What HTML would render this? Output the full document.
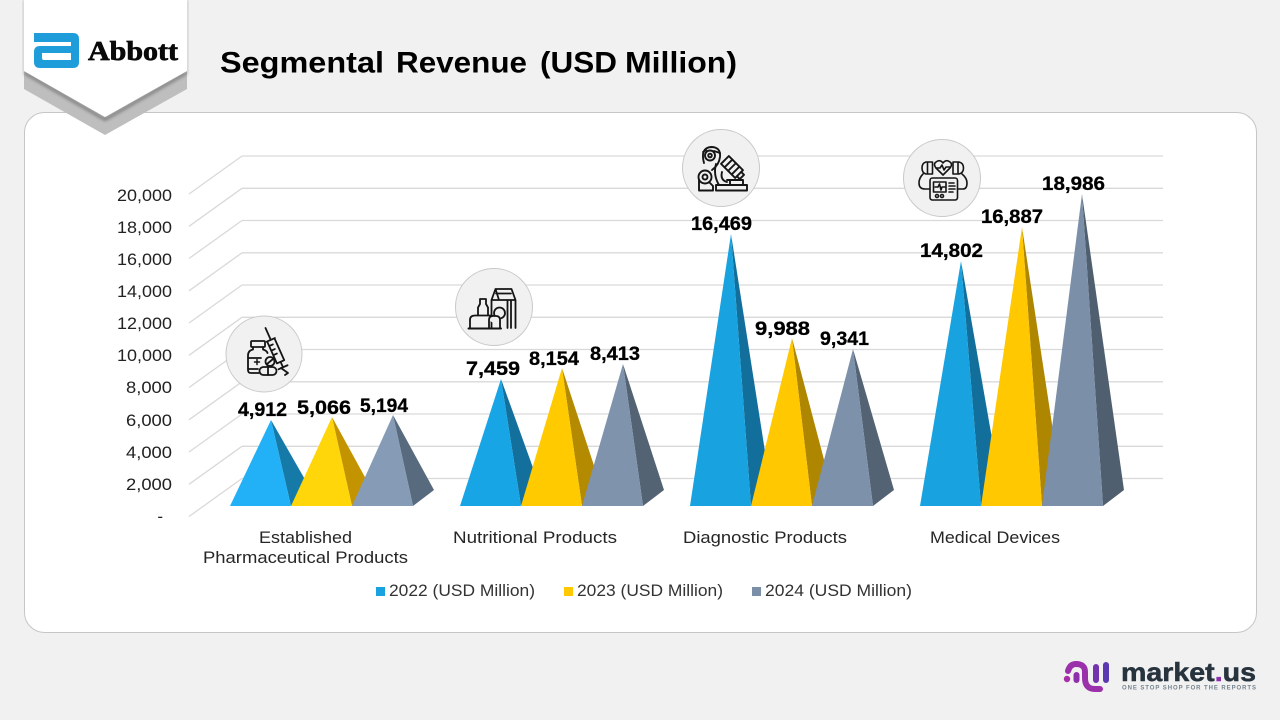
<!DOCTYPE html>
<html>
<head>
<meta charset="utf-8">
<style>
html,body{margin:0;padding:0;background:#f1f1f1;width:1280px;height:720px;overflow:hidden}
svg{display:block}
text{font-family:"Liberation Sans",sans-serif}
</style>
</head>
<body>
<svg width="1280" height="720" viewBox="0 0 1280 720" xmlns="http://www.w3.org/2000/svg">
<defs>
<filter id="bl" x="-10%" y="-30%" width="120%" height="160%"><feGaussianBlur stdDeviation="1.6"/></filter>
</defs>
<rect width="1280" height="720" fill="#f1f1f1"/>
<!-- card -->
<rect x="24.5" y="112.5" width="1232" height="520" rx="20" fill="#fff" stroke="#c6c6c6"/>

<!-- grid -->
<g stroke="#d9d9d9" stroke-width="1.300" fill="none">
<path d="M242 156H1163M242 188.300H1163M242 220.500H1163M242 252.800H1163M242 285H1163M242 317.300H1163M242 349.500H1163M242 381.800H1163M242 414H1163M242 446.300H1163M242 478.500H1163"/>
<path d="M242 156L189 194M242 188.300L189 226.300M242 220.500L189 258.500M242 252.800L189 290.800M242 285L189 323M242 317.300L189 355.300M242 349.500L189 387.500M242 381.800L189 419.800M242 414L189 452M242 446.300L189 484.300M242 478.500L189 516.500"/>
</g>

<!-- pyramids group 1 -->
<polygon points="271,420 291,506 311,490" fill="#157aa8"/>
<polygon points="271,420 230,506 291,506" fill="#22b0f6"/>
<polygon points="332,417 352,506 372,490" fill="#c49400"/>
<polygon points="332,417 291,506 352,506" fill="#ffd60a"/>
<polygon points="393,415 413,506 434,490" fill="#586a7e"/>
<polygon points="393,415 352,506 413,506" fill="#869bb5"/>
<!-- group 2 -->
<polygon points="501,379 521,506 541,490" fill="#13709c"/>
<polygon points="501,379 460,506 521,506" fill="#18a5e6"/>
<polygon points="562,368 582,506 602,490" fill="#b38a00"/>
<polygon points="562,368 521,506 582,506" fill="#ffcb00"/>
<polygon points="623,364 643,506 664,490" fill="#536373"/>
<polygon points="623,364 582,506 643,506" fill="#7f93ac"/>
<!-- group 3 -->
<polygon points="731,234 751,506 771,490" fill="#126f9b"/>
<polygon points="731,234 690,506 751,506" fill="#18a2e0"/>
<polygon points="792,338 812,506 832,490" fill="#ae8600"/>
<polygon points="792,338 751,506 812,506" fill="#ffc800"/>
<polygon points="853,349 873,506 894,490" fill="#536373"/>
<polygon points="853,349 812,506 873,506" fill="#7d91aa"/>
<!-- group 4 -->
<polygon points="961,261 981,506 1001,490" fill="#126f9b"/>
<polygon points="961,261 920,506 981,506" fill="#18a2e0"/>
<polygon points="1022,227 1042,506 1062,490" fill="#ae8600"/>
<polygon points="1022,227 981,506 1042,506" fill="#ffc800"/>
<polygon points="1082,194 1103,506 1124,490" fill="#505f6f"/>
<polygon points="1082,194 1042,506 1103,506" fill="#7b8fa8"/>

<!-- axis labels -->
<g font-size="17" fill="#222" text-anchor="end">
<text x="172" y="201" textLength="55" lengthAdjust="spacingAndGlyphs">20,000</text>
<text x="172" y="233" textLength="55" lengthAdjust="spacingAndGlyphs">18,000</text>
<text x="172" y="265" textLength="55" lengthAdjust="spacingAndGlyphs">16,000</text>
<text x="172" y="297" textLength="55" lengthAdjust="spacingAndGlyphs">14,000</text>
<text x="172" y="329" textLength="55" lengthAdjust="spacingAndGlyphs">12,000</text>
<text x="172" y="361" textLength="55" lengthAdjust="spacingAndGlyphs">10,000</text>
<text x="172" y="393" textLength="46" lengthAdjust="spacingAndGlyphs">8,000</text>
<text x="172" y="426" textLength="46" lengthAdjust="spacingAndGlyphs">6,000</text>
<text x="172" y="458" textLength="46" lengthAdjust="spacingAndGlyphs">4,000</text>
<text x="172" y="490" textLength="46" lengthAdjust="spacingAndGlyphs">2,000</text>
<text x="163" y="522">-</text>
</g>

<!-- value labels -->
<g font-size="19.500" font-weight="700" fill="#000" stroke="#000" stroke-width=".3">
<text x="238" y="416" textLength="49" lengthAdjust="spacingAndGlyphs">4,912</text>
<text x="297" y="414" textLength="54" lengthAdjust="spacingAndGlyphs">5,066</text>
<text x="360" y="412" textLength="48" lengthAdjust="spacingAndGlyphs">5,194</text>
<text x="466" y="375" textLength="54" lengthAdjust="spacingAndGlyphs">7,459</text>
<text x="529" y="365" textLength="50" lengthAdjust="spacingAndGlyphs">8,154</text>
<text x="590" y="360" textLength="50" lengthAdjust="spacingAndGlyphs">8,413</text>
<text x="691" y="230" textLength="61" lengthAdjust="spacingAndGlyphs">16,469</text>
<text x="755" y="335" textLength="55" lengthAdjust="spacingAndGlyphs">9,988</text>
<text x="820" y="345" textLength="49" lengthAdjust="spacingAndGlyphs">9,341</text>
<text x="920" y="257" textLength="63" lengthAdjust="spacingAndGlyphs">14,802</text>
<text x="981" y="223" textLength="62" lengthAdjust="spacingAndGlyphs">16,887</text>
<text x="1042" y="190" textLength="63" lengthAdjust="spacingAndGlyphs">18,986</text>
</g>

<!-- category labels -->
<g font-size="16.500" fill="#262626">
<text x="259" y="543" textLength="93" lengthAdjust="spacingAndGlyphs">Established</text>
<text x="203" y="563" textLength="205" lengthAdjust="spacingAndGlyphs">Pharmaceutical Products</text>
<text x="453" y="543" textLength="164" lengthAdjust="spacingAndGlyphs">Nutritional Products</text>
<text x="683" y="543" textLength="164" lengthAdjust="spacingAndGlyphs">Diagnostic Products</text>
<text x="930" y="543" textLength="130" lengthAdjust="spacingAndGlyphs">Medical Devices</text>
</g>

<!-- legend -->
<rect x="376" y="587" width="9" height="9" fill="#18a2e0"/>
<rect x="564" y="587" width="9" height="9" fill="#ffc800"/>
<rect x="752" y="587" width="9" height="9" fill="#7b8fa8"/>
<g font-size="16.500" fill="#333">
<text x="389" y="596" textLength="146" lengthAdjust="spacingAndGlyphs">2022 (USD Million)</text>
<text x="577" y="596" textLength="146" lengthAdjust="spacingAndGlyphs">2023 (USD Million)</text>
<text x="765" y="596" textLength="147" lengthAdjust="spacingAndGlyphs">2024 (USD Million)</text>
</g>

<!-- circles -->
<g fill="#f1f1f1" stroke="#c9c9c9" stroke-width="1">
<circle cx="264" cy="354" r="38"/>
<circle cx="494" cy="307" r="38.500"/>
<circle cx="721" cy="168" r="38.500"/>
<circle cx="942" cy="178" r="38.500"/>
</g>

<!-- icon 1: vial + syringe -->
<g fill="none" stroke="#151515" stroke-width="1.800" stroke-linecap="round" stroke-linejoin="round">
<rect x="251" y="341" width="14" height="6" rx="1"/>
<path d="M253 347v2.500q-5 1-5 6V370q0 3 3 3h8M263 347v2.500q3.500 .8 4.500 3.500M248 358h13M248 369h10"/>
<path d="M257 359.500v5M254.500 362h5" stroke-width="1.500"/>
<rect x="259.500" y="367" width="17" height="8" rx="4"/>
<path d="M268 367v8"/>
<circle cx="270" cy="361.500" r="4.500"/>
<path d="M267 364l6-5"/>
<g transform="translate(265.500 328) rotate(-24)">
<path d="M0 0V13M-4.500 13H4.500M-4 13V37H4V13M0 37V43M-5 43H5M-4 18H0M-4 23H0M-4 28H0"/>
</g>
<path d="M281 368l7 5-3 2"/>
</g>

<!-- icon 2: food -->
<g fill="none" stroke="#151515" stroke-width="1.800" stroke-linecap="round" stroke-linejoin="round">
<path d="M491.500 328V300L495.500 289H511.500L515.500 300V328M491.500 300H515.500M495.500 289L499 300M496 293.500H511M507.500 300V328M511 300V328"/>
<circle cx="499.500" cy="313" r="5.500" fill="#f1f1f1"/>
<path d="M478 315V307.500L480 304V299H486V304L488 307.500V315" fill="#f1f1f1"/>
<path d="M470 328V320Q470 315.500 475 315.500H492Q489 316.500 489 320V328M489 320Q489 316 493 316H496Q500 316 500 320V328" fill="#f1f1f1"/>
<path d="M468.500 328.500H501" stroke-width="2"/>
</g>

<!-- icon 3: microscope -->
<g fill="none" stroke="#151515" stroke-width="1.900" stroke-linecap="round" stroke-linejoin="round">
<path d="M704 163Q700 148 711 147Q721 147 720 157Q719 165 712 170"/>
<circle cx="710" cy="155.500" r="5"/>
<circle cx="710" cy="155.500" r="1.800"/>
<path d="M706 150L703 152M714 151L720 153"/>
<g transform="translate(732 167) rotate(45)">
<rect x="-10" y="-5.500" width="20" height="11"/>
<path d="M-5 -5.500V5.500M0 -5.500V5.500M5 -5.500V5.500M10 -3H14V3H10"/>
</g>
<circle cx="705" cy="177" r="6.500"/>
<circle cx="705" cy="177" r="2.500"/>
<path d="M699 180V190.500H713V186L709 182M716 164Q713 175 719 185M722 172Q720 180 727 182"/>
<path d="M727 180H743V185M730 180V185"/>
<rect x="716" y="185" width="31" height="5.500"/>
</g>

<!-- icon 4: defibrillator -->
<g fill="none" stroke="#151515" stroke-width="1.600" stroke-linecap="round" stroke-linejoin="round">
<path d="M943 175L936 168Q933 164 936 162Q940 159 943 163Q946 159 950 162Q953 164 950 168Z"/>
<path d="M936 168H940L942 165L944 170L946 167H950"/>
<path d="M926 162H932.500V174H926Q922 173 922 168Q922 163 926 162ZM927.500 162V174"/>
<path d="M953 162H959Q963.500 163 963.500 168Q963.500 173 959 174H953ZM958 162V174"/>
<rect x="930" y="178" width="27.500" height="22" rx="2.500"/>
<rect x="933.500" y="182" width="12.500" height="10"/>
<path d="M935 187H938L939.500 184L941 190L942 187H945"/>
<path d="M949 183H954M949 186H955M949 189H955M949 192H953"/>
<circle cx="937" cy="196" r="1.500"/><circle cx="942" cy="196" r="1.500"/>
<path d="M923 174Q919 178 919 183Q919 189 925 189H930M962 174Q967 178 967 183Q967 189 963 189H957.500"/>
</g>

<!-- badge -->
<polygon points="24,71 24,89 105,135 187,89 187,71 105,117" fill="#bebebe"/>
<polygon points="24,71 105,118 187,71 187,74 105,121 24,74" fill="#444" opacity=".6" filter="url(#bl)"/>
<rect x="185.500" y="0" width="3" height="71" fill="#888" opacity=".35" filter="url(#bl)"/>
<rect x="22.500" y="0" width="3" height="71" fill="#888" opacity=".35" filter="url(#bl)"/>
<polygon points="24,0 187,0 187,71 105,117 24,71" fill="#fff"/>
<path fill-rule="evenodd" fill="#1f9ddb" d="M34 33H73Q79 33 79 39V62Q79 68 73 68H40Q34 68 34 62V52Q34 46 40 46H71V42H34ZM42 53V58Q42 60 44 60H71V53Z"/>
<text x="88" y="60" font-size="27" font-weight="700" fill="#0a0a0a" textLength="90" lengthAdjust="spacingAndGlyphs" style="font-family:'Liberation Serif',serif" stroke="#0a0a0a" stroke-width=".7">Abbott</text>

<!-- title -->
<g font-size="30" font-weight="700" fill="#000">
<text x="220" y="72.500" textLength="164" lengthAdjust="spacingAndGlyphs">Segmental</text>
<text x="396" y="72.500" textLength="131" lengthAdjust="spacingAndGlyphs">Revenue</text>
<text x="540" y="72.500" textLength="77" lengthAdjust="spacingAndGlyphs">(USD</text>
<text x="625" y="72.500" textLength="112" lengthAdjust="spacingAndGlyphs">Million)</text>
</g>

<!-- market.us logo -->
<g fill="none" stroke-width="6" stroke-linecap="round" stroke-linejoin="round">
<path d="M1068 671Q1070 664 1076 664Q1085 664 1085 672V678Q1085 689 1095 689H1100" stroke="#9a30aa"/>
<path d="M1076.500 675V680" stroke="#8f30ab"/>
<path d="M1096 667V680" stroke="#7433ae"/>
<path d="M1106 665V680" stroke="#5a38b2"/>
</g>
<circle cx="1067" cy="679" r="3.200" fill="#a82ea6"/>
<text x="1121" y="681" font-size="26" font-weight="700" fill="#27333d" stroke="#27333d" stroke-width=".5" textLength="135" lengthAdjust="spacingAndGlyphs">market<tspan fill="#8a2fae" stroke="#8a2fae">.</tspan>us</text>
<text x="1122" y="689.500" font-size="6" font-weight="700" fill="#75838e" textLength="134" lengthAdjust="spacing">ONE STOP SHOP FOR THE REPORTS</text>
</svg>
</body>
</html>
